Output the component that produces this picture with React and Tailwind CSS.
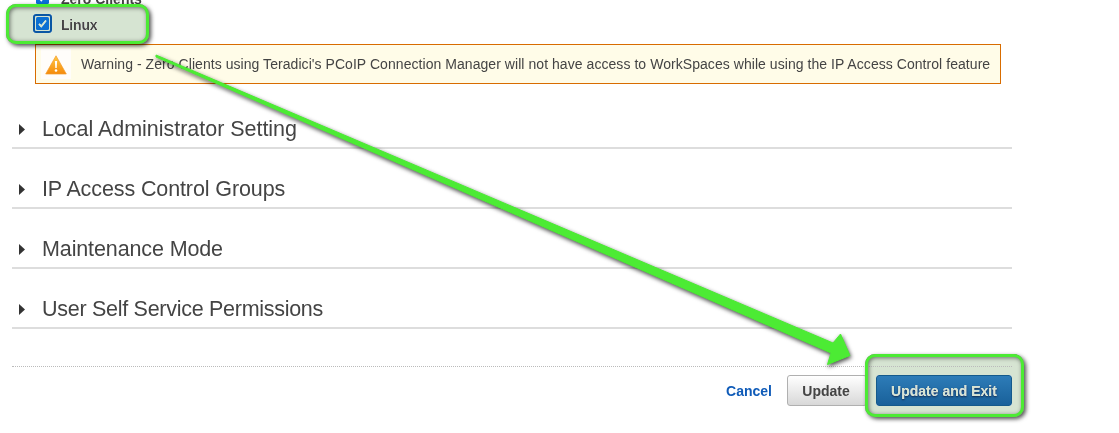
const sections = [
  { title: "Local Administrator Setting", spacing: "tracking-[-0.03px]" },
  { title: "IP Access Control Groups", spacing: "tracking-[-0.11px]" },
  { title: "Maintenance Mode", spacing: "tracking-[-0.12px]" },
  { title: "User Self Service Permissions", spacing: "tracking-[-0.28px]" },
];

function Check({ focused }) {
  return (
    <span className={"flex h-[19px] w-[19px] shrink-0 items-center justify-center rounded-[3px] " + (focused ? "border-2 border-[#0a57a4] bg-[#d6e4ee]" : "")}>
      <svg width="13" height="13" viewBox="0 0 13 13">
        <rect width="13" height="13" rx="1.5" fill="#0a6fdb" />
        <path d="M3 6.8 5.3 9.3 10 3.5" fill="none" stroke="#fff" strokeWidth="1.8" />
      </svg>
    </span>
  );
}

function Option({ label, focused }) {
  return (
    <div className="flex h-[25px] shrink-0 items-center gap-[9px] pl-[33px]">
      <Check focused={focused} />
      <span className={"pt-[3px] text-[14px] leading-4 font-bold " + (focused ? "tracking-[-0.2px]" : "")}>{label}</span>
    </div>
  );
}

function Highlight({ place }) {
  return (
    <>
      <div className={"pointer-events-none absolute rounded-[10px] bg-[#d6e4d2] mix-blend-darken " + place} />
      <div className={"pointer-events-none absolute rounded-[10px] shadow-[inset_1px_1px_4px_3px_rgba(0,0,0,0.5)] " + place} />
      <div className={"pointer-events-none absolute rounded-[10px] border-[3px] border-[#4ceb34] shadow-[2px_2px_4px_rgba(0,0,0,0.7)] " + place} />
    </>
  );
}

export default function App() {
  return (
    <div className="relative h-[433px] w-[1119px] overflow-hidden bg-white font-['Liberation_Sans',Arial,sans-serif] text-[#444]">
      <div className="flex h-[44px] flex-col justify-end gap-px overflow-hidden pb-[8px]">
        <Option label="Zero Clients" />
        <Option label="Linux" focused />
      </div>
      <div className="ml-[35px] flex h-[40px] w-[966px] items-center border border-[#d86c00] bg-[#fffce8] pl-[5px]">
        <div className="flex h-[30px] w-[30px] items-end justify-center bg-[#fffdfa] pb-[4px]">
          <svg width="22" height="20" viewBox="0 0 22 20">
            <defs>
              <linearGradient id="warn" x2="0" y2="1"><stop stopColor="#ffc943" /><stop offset="1" stopColor="#f58a0c" /></linearGradient>
            </defs>
            <path d="M11 .8 21.3 19H.7Z" fill="url(#warn)" stroke="#f49b2b" strokeWidth=".7" strokeLinejoin="round" />
            <path d="M9.9 6h2.2l-.4 7h-1.4Z" fill="#fff" />
            <circle cx="11" cy="15.5" r="1.3" fill="#fff" />
          </svg>
        </div>
        <span className="ml-[10px] text-[14px] tracking-[0.055px] whitespace-nowrap">Warning - Zero Clients using Teradici's PCoIP Connection Manager will not have access to WorkSpaces while using the IP Access Control feature</span>
      </div>
      <div className="ml-[12px] w-[1000px] pt-[5px]">
        {sections.map((s) => (
          <div key={s.title} className="flex h-[60px] items-end border-b-2 border-[#ddd] pb-[5px]">
            <svg className="mr-[17px] mb-[7px] ml-[7px]" width="6" height="11" viewBox="0 0 6 11"><path d="M0 0 6 5.5 0 11Z" fill="#333" /></svg>
            <h2 className={"text-[21.5px] leading-[25px] whitespace-nowrap " + s.spacing}>{s.title}</h2>
          </div>
        ))}
      </div>
      <div className="mt-[37px] ml-[12px] w-[1000px] border-t border-dotted border-[#bbb]">
        <div className="flex items-center justify-end pt-[8px] text-[14px] font-bold">
          <a className="mr-[15px] pt-[2px] text-[#0f5bb8]">Cancel</a>
          <button className="mr-[9px] h-[31px] w-[80px] rounded-[3px] border border-[#b0b0b0] bg-linear-to-b from-white to-[#d8d8d8] pt-[2px] pr-[2px] text-[#444]">Update</button>
          <button className="h-[31px] w-[136px] rounded-[3px] border border-[#145a8c] bg-linear-to-b from-[#2d7cb8] to-[#19619a] pt-[2px] text-white [text-shadow:0_1px_2px_#124]">Update and Exit</button>
        </div>
      </div>
      <Highlight place="top-[4px] left-[6px] h-[40px] w-[143px]" />
      <Highlight place="top-[354px] left-[865px] h-[63px] w-[159px]" />
      <svg className="pointer-events-none absolute inset-0 drop-shadow-[1px_2px_2px_rgba(0,0,0,0.7)]" width="1119" height="433" viewBox="0 0 1119 433">
        <path d="M156 55 833 343 840.5 334 850 355.5 827.5 364.5 831 353 156 57Z" fill="#4ceb34" strokeLinejoin="round" stroke="#4ceb34" />
      </svg>
    </div>
  );
}
